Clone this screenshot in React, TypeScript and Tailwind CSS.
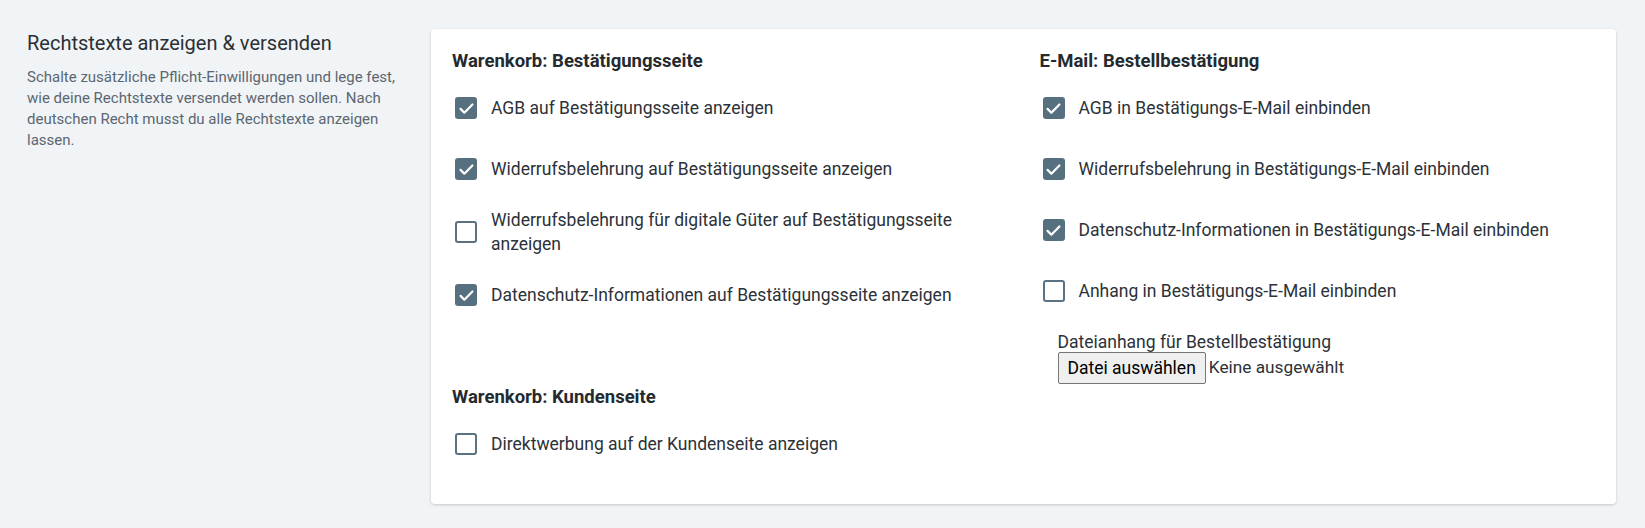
import { useState } from "react";

type Option = {
  id: string;
  label: string;
  checked: boolean;
};

const confirmationPage: Option[] = [
  { id: "agb-page", label: "AGB auf Bestätigungsseite anzeigen", checked: true },
  {
    id: "withdrawal-page",
    label: "Widerrufsbelehrung auf Bestätigungsseite anzeigen",
    checked: true,
  },
  {
    id: "withdrawal-digital-page",
    label: "Widerrufsbelehrung für digitale Güter auf Bestätigungsseite anzeigen",
    checked: false,
  },
  {
    id: "privacy-page",
    label: "Datenschutz-Informationen auf Bestätigungsseite anzeigen",
    checked: true,
  },
];

const customerPage: Option[] = [
  {
    id: "ads-customer",
    label: "Direktwerbung auf der Kundenseite anzeigen",
    checked: false,
  },
];

const orderMail: Option[] = [
  { id: "agb-mail", label: "AGB in Bestätigungs-E-Mail einbinden", checked: true },
  {
    id: "withdrawal-mail",
    label: "Widerrufsbelehrung in Bestätigungs-E-Mail einbinden",
    checked: true,
  },
  {
    id: "privacy-mail",
    label: "Datenschutz-Informationen in Bestätigungs-E-Mail einbinden",
    checked: true,
  },
  {
    id: "attachment-mail",
    label: "Anhang in Bestätigungs-E-Mail einbinden",
    checked: false,
  },
];

function CheckRow({
  option,
  checked,
  onToggle,
}: {
  option: Option;
  checked: boolean;
  onToggle: () => void;
}) {
  return (
    <label
      htmlFor={option.id}
      className="flex min-h-[48px] cursor-pointer items-center py-[2px]"
    >
      <button
        id={option.id}
        type="button"
        role="checkbox"
        aria-checked={checked}
        onClick={onToggle}
        className={
          checked
            ? "ml-[3px] flex h-[22px] w-[22px] shrink-0 items-center justify-center rounded-[3px] bg-[#56707f]"
            : "ml-[3px] flex h-[22px] w-[22px] shrink-0 items-center justify-center rounded-[3px] border-2 border-[#5b7282] bg-white"
        }
      >
        {checked && (
          <svg viewBox="0 0 24 24" className="h-[19px] w-[19px]" fill="none">
            <path
              d="M4.5 12.5l4.8 4.8L19.5 7"
              stroke="white"
              strokeWidth="2.8"
              strokeLinecap="round"
              strokeLinejoin="round"
            />
          </svg>
        )}
      </button>
      <span className="ml-[14px] text-[17.5px] leading-6 text-[#2c3238]">
        {option.label}
      </span>
    </label>
  );
}

function OptionGroup({
  title,
  options,
  state,
  onToggle,
}: {
  title: string;
  options: Option[];
  state: Record<string, boolean>;
  onToggle: (id: string) => void;
}) {
  return (
    <div className="flex flex-col">
      <h3 className="text-[18.5px] font-bold leading-6 text-[#252a2f]">
        {title}
      </h3>
      <div className="mt-[11px] flex flex-col gap-[13px]">
        {options.map((option) => (
          <CheckRow
            key={option.id}
            option={option}
            checked={state[option.id]}
            onToggle={() => onToggle(option.id)}
          />
        ))}
      </div>
    </div>
  );
}

export default function App() {
  const [state, setState] = useState<Record<string, boolean>>(() => {
    const initial: Record<string, boolean> = {};
    [...confirmationPage, ...customerPage, ...orderMail].forEach((o) => {
      initial[o.id] = o.checked;
    });
    return initial;
  });

  const toggle = (id: string) =>
    setState((prev) => ({ ...prev, [id]: !prev[id] }));

  return (
    <main className="flex min-h-screen gap-8 bg-[#f1f4f7] pl-[27px] pr-[29px] pt-[29px] font-['Roboto',sans-serif]">
      <div className="w-[372px] shrink-0">
        <h2 className="text-[20px] leading-7 text-[#2b3035]">
          Rechtstexte anzeigen &amp; versenden
        </h2>
        <p className="mt-[10px] text-[15px] leading-[21px] text-[#5c6670]">
          Schalte zusätzliche Pflicht-Einwilligungen und lege fest, wie deine
          Rechtstexte versendet werden sollen. Nach deutschen Recht musst du
          alle Rechtstexte anzeigen lassen.
        </p>
      </div>

      <section className="grid h-fit flex-1 grid-cols-2 gap-x-8 rounded bg-white px-[21px] pb-[36px] pt-5 shadow-[0_1px_3px_rgba(0,0,0,0.18)]">
        <div className="flex flex-col gap-[66px]">
          <OptionGroup
            title="Warenkorb: Bestätigungsseite"
            options={confirmationPage}
            state={state}
            onToggle={toggle}
          />
          <OptionGroup
            title="Warenkorb: Kundenseite"
            options={customerPage}
            state={state}
            onToggle={toggle}
          />
        </div>

        <div className="flex flex-col">
          <OptionGroup
            title="E-Mail: Bestellbestätigung"
            options={orderMail}
            state={state}
            onToggle={toggle}
          />
          <div className="ml-[18px] mt-[17px]">
            <div className="text-[17.5px] leading-5 text-[#2c3238]">
              Dateianhang für Bestellbestätigung
            </div>
            <div className="flex items-center gap-[3px]">
              <button
                type="button"
                className="h-[32px] rounded-[2px] border border-[#767676] bg-[#efefef] px-[9px] text-[17.5px] text-black"
              >
                Datei auswählen
              </button>
              <span className="text-[17.25px] text-[#2c3238]">Keine ausgewählt</span>
            </div>
          </div>
        </div>
      </section>
    </main>
  );
}
